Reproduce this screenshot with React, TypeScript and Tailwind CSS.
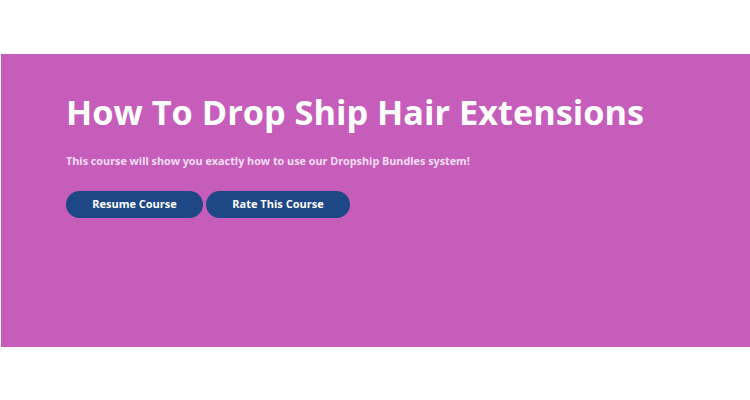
export default function App() {
  return (
    <div className="w-[750px] h-[400px] bg-white pt-[54px] pl-px" style={{ fontFamily: '"Open Sans", sans-serif' }}>
      <div className="h-[293px] bg-[#c75dbb] pl-[65px] pt-[35px]">
        <h1 className="text-[34.3px] leading-[46px] font-bold text-white">How To Drop Ship Hair Extensions</h1>
        <p className="mt-[17px] text-[10.8px] leading-[18px] font-bold text-[#f3dff0]">
          This course will show you exactly how to use our Dropship Bundles system!
        </p>
        <div className="mt-[21px] flex gap-[3px]">
          <button className="h-[27px] w-[137px] rounded-full bg-[#1d4785] text-white text-[11px] font-bold">Resume Course</button>
          <button className="h-[27px] w-[144px] rounded-full bg-[#1d4785] text-white text-[11px] font-bold">Rate This Course</button>
        </div>
      </div>
    </div>
  );
}
